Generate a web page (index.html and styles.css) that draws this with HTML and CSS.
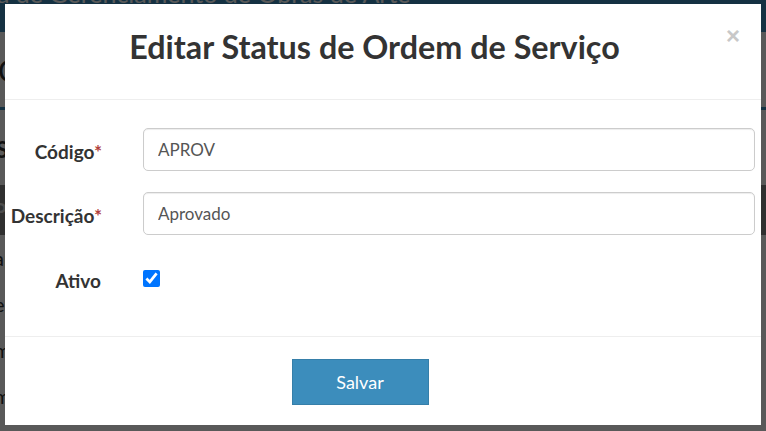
FILE: index.html
```html
<!DOCTYPE html>
<html lang="pt-BR">
<head>
<meta charset="utf-8">
<title>Editar Status de Ordem de Serviço</title>
<link rel="stylesheet" href="styles.css">
</head>
<body>
<div class="page">
  <header class="navbar">
    <span class="brand">Sistema de Gerenciamento de Obras de Arte</span>
  </header>
  <section class="content-header">
    <h1 class="page-title">Ordem de Serviço</h1>
  </section>
  <section class="box">
    <h3 class="box-title">Status de Ordem de Serviço</h3>
    <div class="table-head">Pesquisar</div>
    <div class="table-row">aprovado</div>
    <div class="table-row">em execução</div>
    <div class="table-row">m análise</div>
    <div class="table-row">m</div>
  </section>
</div>

<div class="backdrop"></div>

<div class="modal" role="dialog">
  <div class="modal-header">
    <h4 class="modal-title">Editar Status de Ordem de Serviço</h4>
    <button class="close" type="button" aria-label="Fechar">×</button>
  </div>
  <form class="modal-body">
    <label class="form-label" for="codigo">Código<span class="req">*</span></label>
    <input class="form-control" id="codigo" type="text" value="APROV">
    <label class="form-label" for="descricao">Descrição<span class="req">*</span></label>
    <input class="form-control" id="descricao" type="text" value="Aprovado">
    <label class="form-label label-check" for="ativo">Ativo</label>
    <div class="check-cell"><input class="check" id="ativo" type="checkbox" checked></div>
  </form>
  <div class="modal-footer">
    <button class="btn-primary" type="button">Salvar</button>
  </div>
</div>
</body>
</html>
```

FILE: styles.css
```css
* { box-sizing: border-box; }
html, body { margin: 0; padding: 0; }
body {
  width: 766px;
  height: 431px;
  overflow: hidden;
  background: #ffffff;
  font-family: Lato, "Open Sans", sans-serif;
  color: #333;
}

/* background page */
.page { display: flex; flex-direction: column; }
.navbar {
  height: 32px;
  background: #3c8dbc;
  color: #fff;
  overflow: hidden;
  display: flex;
  align-items: flex-end;
}
.brand {
  font-size: 25px;
  line-height: 25px;
  margin-bottom: 26px;
  margin-left: -76px;
  white-space: nowrap;
}
.content-header {
  height: 75px;
  display: flex;
  align-items: center;
}
.page-title {
  margin: 0 0 0 -2px;
  font-size: 30px;
  font-weight: 400;
}
.box {
  border-top: 3px solid #3c8dbc;
  display: flex;
  flex-direction: column;
}
.box-title {
  margin: 0 0 0 -4px;
  height: 75px;
  display: flex;
  align-items: center;
  font-size: 22px;
  padding-top: 4px;
}
.table-head {
  height: 50px;
  background: #888;
  color: #ddd;
  font-weight: 700;
  font-size: 20px;
  display: flex;
  align-items: center;
  margin-left: -6px;
}
.table-row {
  height: 46px;
  display: flex;
  align-items: center;
  font-size: 20px;
  margin-left: -6px;
}

.backdrop {
  position: fixed;
  inset: 0;
  background: rgba(0, 0, 0, 0.65);
}

/* modal */
.modal {
  position: fixed;
  left: 5px;
  top: 4px;
  width: 756px;
  height: 421px;
  background: #fff;
  display: flex;
  flex-direction: column;
}
.modal-header {
  height: 96px;
  border-bottom: 1px solid #eeeeee;
  display: flex;
  align-items: center;
  justify-content: center;
  padding-right: 17px;
  position: relative;
}
.modal-title {
  margin: 0;
  font-size: 32.3px;
  font-weight: 700;
  color: #333;
  line-height: 1;
  padding-bottom: 8px;
}
.close {
  position: absolute;
  right: 21px;
  top: 20px;
  border: 0;
  background: none;
  padding: 0;
  font-family: "Liberation Sans", Arial, sans-serif;
  font-size: 24px;
  font-weight: 700;
  line-height: 1;
  color: #c8c8c8;
}
.modal-body {
  margin: 0;
  flex: 1;
  padding: 28px 6px 0 0;
  display: grid;
  grid-template-columns: 98px 1fr;
  grid-auto-rows: 43px;
  column-gap: 40px;
  row-gap: 21px;
  align-content: start;
}
.form-label {
  justify-self: end;
  align-self: center;
  font-weight: 700;
  font-size: 19px;
  color: #333;
  white-space: nowrap;
  padding-top: 3px;
  margin-right: 1px;
}
.label-check { padding-top: 6px; margin-right: 2px; }
.req { color: #b13f3c; }
.form-control {
  height: 43px;
  width: 100%;
  border: 1px solid #cccccc;
  border-radius: 5px;
  padding: 0 14px;
  font-family: inherit;
  font-size: 17px;
  color: #555;
  background: #fff;
  box-shadow: inset 0 1px 1px rgba(0,0,0,.075);
}
.check-cell {
  display: flex;
  align-items: center;
  padding-top: 2px;
}
.check {
  margin: 0;
  width: 17px;
  height: 17px;
}
.modal-footer {
  height: 89px;
  border-top: 1px solid #eeeeee;
  display: flex;
  align-items: center;
  justify-content: center;
}
.btn-primary {
  width: 137px;
  height: 46px;
  background: #3c8dbc;
  border: 1px solid #367fa9;
  color: #fff;
  font-family: inherit;
  font-size: 18px;
  margin-right: 46px;
  margin-top: 1px;
}
```
